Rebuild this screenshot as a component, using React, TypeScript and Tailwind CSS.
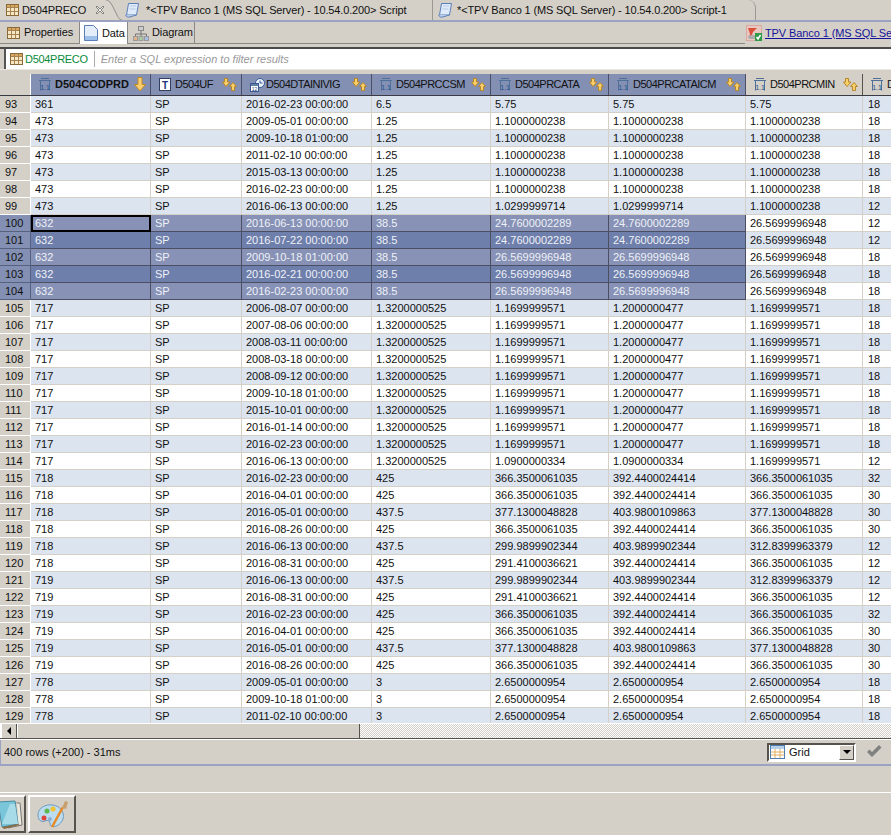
// @ts-nocheck
const FONT = "font-['Liberation_Sans',Arial,sans-serif]";

type Row = [number, string, string, string, string, string, string, string];

const P = "1.1000000238";
const A = "26.5699996948";
const K = "1.3200000525";
const L = "1.1699999571";
const M = "1.2000000477";
const S = "366.3500061035";
const T = "392.4400024414";
const U = "377.1300048828";
const V = "403.9800109863";
const W = "299.9899902344";
const X = "403.9899902344";
const Y = "312.8399963379";
const Z = "291.4100036621";
const G = "2.6500000954";

const rows: Row[] = [
  [93, "361", "2016-02-23 00:00:00", "6.5", "5.75", "5.75", "5.75", "18"],
  [94, "473", "2009-05-01 00:00:00", "1.25", P, P, P, "18"],
  [95, "473", "2009-10-18 01:00:00", "1.25", P, P, P, "18"],
  [96, "473", "2011-02-10 00:00:00", "1.25", P, P, P, "18"],
  [97, "473", "2015-03-13 00:00:00", "1.25", P, P, P, "18"],
  [98, "473", "2016-02-23 00:00:00", "1.25", P, P, P, "18"],
  [99, "473", "2016-06-13 00:00:00", "1.25", "1.0299999714", "1.0299999714", P, "12"],
  [100, "632", "2016-06-13 00:00:00", "38.5", "24.7600002289", "24.7600002289", A, "12"],
  [101, "632", "2016-07-22 00:00:00", "38.5", "24.7600002289", "24.7600002289", A, "12"],
  [102, "632", "2009-10-18 01:00:00", "38.5", A, A, A, "18"],
  [103, "632", "2016-02-21 00:00:00", "38.5", A, A, A, "18"],
  [104, "632", "2016-02-23 00:00:00", "38.5", A, A, A, "18"],
  [105, "717", "2006-08-07 00:00:00", K, L, M, L, "18"],
  [106, "717", "2007-08-06 00:00:00", K, L, M, L, "18"],
  [107, "717", "2008-03-11 00:00:00", K, L, M, L, "18"],
  [108, "717", "2008-03-18 00:00:00", K, L, M, L, "18"],
  [109, "717", "2008-09-12 00:00:00", K, L, M, L, "18"],
  [110, "717", "2009-10-18 01:00:00", K, L, M, L, "18"],
  [111, "717", "2015-10-01 00:00:00", K, L, M, L, "18"],
  [112, "717", "2016-01-14 00:00:00", K, L, M, L, "18"],
  [113, "717", "2016-02-23 00:00:00", K, L, M, L, "18"],
  [114, "717", "2016-06-13 00:00:00", K, "1.0900000334", "1.0900000334", L, "12"],
  [115, "718", "2016-02-23 00:00:00", "425", S, T, S, "32"],
  [116, "718", "2016-04-01 00:00:00", "425", S, T, S, "30"],
  [117, "718", "2016-05-01 00:00:00", "437.5", U, V, U, "30"],
  [118, "718", "2016-08-26 00:00:00", "425", S, T, S, "30"],
  [119, "718", "2016-06-13 00:00:00", "437.5", W, X, Y, "12"],
  [120, "718", "2016-08-31 00:00:00", "425", Z, T, S, "12"],
  [121, "719", "2016-06-13 00:00:00", "437.5", W, X, Y, "12"],
  [122, "719", "2016-08-31 00:00:00", "425", Z, T, S, "12"],
  [123, "719", "2016-02-23 00:00:00", "425", S, T, S, "32"],
  [124, "719", "2016-04-01 00:00:00", "425", S, T, S, "30"],
  [125, "719", "2016-05-01 00:00:00", "437.5", U, V, U, "30"],
  [126, "719", "2016-08-26 00:00:00", "425", S, T, S, "30"],
  [127, "778", "2009-05-01 00:00:00", "3", G, G, G, "18"],
  [128, "778", "2009-10-18 01:00:00", "3", G, G, G, "18"],
  [129, "778", "2011-02-10 00:00:00", "3", G, G, G, "18"],
];

function TableIcon() {
  return (
    <svg width="13" height="12" viewBox="0 0 13 12" className="shrink-0">
      <rect x="0.5" y="0.5" width="12" height="11" fill="#f6e8c4" stroke="#8a6a3a" />
      <rect x="1" y="1" width="11" height="2" fill="#d9a860" />
      <path d="M4.500 1v10M8.500 1v10M1 3.500h11M1 7.500h11" stroke="#a5824f" />
    </svg>
  );
}

function ScriptIcon() {
  return (
    <svg width="14" height="16" viewBox="0 0 14 16" className="shrink-0">
      <path d="M3.500 1.500h10l-2 11.500h-10z" fill="#dfeafa" stroke="#5b7fb5" />
      <path d="M0.500 13c1 2 2.500 2.500 4 2l7-2" fill="#b9d0ee" stroke="#5b7fb5" />
      <path d="M5 4h6M4.500 7h6" stroke="#b7cbe6" />
    </svg>
  );
}

function DataIcon() {
  return (
    <svg width="14" height="16" viewBox="0 0 14 16" className="shrink-0">
      <path d="M0.500 0.500h9l4 4v11h-13z" fill="#e4eefb" stroke="#5b7fb5" />
      <rect x="1" y="11" width="12" height="4" fill="#9cc0ea" />
    </svg>
  );
}

function DiagramIcon() {
  return (
    <svg width="16" height="16" viewBox="0 0 16 16" className="shrink-0">
      <path d="M8 5v4M2.500 11V9h11v2M8 9v2" fill="none" stroke="#777" />
      <rect x="5.500" y="1.500" width="5" height="4" fill="#ccc" stroke="#888" />
      <rect x="0.500" y="11.500" width="4" height="4" fill="#e7b48a" stroke="#999" />
      <rect x="6" y="11.500" width="4" height="4" fill="#a8d0a0" stroke="#999" />
      <rect x="11.500" y="11.500" width="4" height="4" fill="#a8c0e8" stroke="#999" />
    </svg>
  );
}

function NumIcon() {
  return (
    <svg width="12" height="13" viewBox="0 0 12 13" className="shrink-0">
      <path d="M0 2.500h12M2 0.500h8" stroke="#4f7098" />
      <path d="M1.500 3v9.500M10.500 3v9.500" stroke="#4f7098" />
      <text x="6" y="11.500" textAnchor="middle" fontSize="7" fill="#1f4f8a" fontFamily="Liberation Sans">1.1</text>
    </svg>
  );
}

function TextIcon() {
  return (
    <svg width="12" height="13" viewBox="0 0 12 13" className="shrink-0">
      <rect x="0.500" y="0.500" width="11" height="12" fill="#fff" stroke="#333e60" />
      <text x="6" y="10.500" textAnchor="middle" fontSize="10" fontWeight="700" fill="#1b3a78" fontFamily="Liberation Sans">T</text>
    </svg>
  );
}

function DateIcon() {
  return (
    <svg width="15" height="14" viewBox="0 0 15 14" className="shrink-0">
      <circle cx="10" cy="5" r="4.500" fill="#e8f0fa" stroke="#39598f" />
      <path d="M10 2.500V5h2.500" fill="none" stroke="#39598f" />
      <rect x="0.500" y="5.500" width="8" height="8" fill="#fff" stroke="#39598f" />
      <rect x="1" y="6" width="7" height="2" fill="#5f7ea8" />
      <text x="4.500" y="13" textAnchor="middle" fontSize="5" fill="#1b3a78" fontFamily="Liberation Sans">12</text>
    </svg>
  );
}

function SortIcon() {
  return (
    <svg width="15" height="13" viewBox="0 0 15 13" className="shrink-0">
      <path d="M2.500 0.500h3v3.500h2.500L4 8.500 0.500 4h2z" fill="#f8cf68" stroke="#b8862a" />
      <path d="M11 4.500l3.500 4H12.500v4h-3v-4H7.500z" fill="#f8cf68" stroke="#b8862a" />
    </svg>
  );
}

function SortDownIcon() {
  return (
    <svg width="12" height="15" viewBox="0 0 12 15" className="shrink-0">
      <path d="M4 0.500h4v7h3.500L6 14 0.500 7.500H4z" fill="#f7cf6e" stroke="#c08a24" />
    </svg>
  );
}

const headers = [
  { w: "w-[120px]", name: "D504CODPRD", Icon: NumIcon, sel: true, bold: true },
  { w: "w-[91px]", name: "D504UF", Icon: TextIcon, sel: true },
  { w: "w-[130px]", name: "D504DTAINIVIG", Icon: DateIcon, sel: true, tight: true },
  { w: "w-[119px]", name: "D504PRCCSM", Icon: NumIcon, sel: true },
  { w: "w-[118px]", name: "D504PRCATA", Icon: NumIcon, sel: true },
  { w: "w-[137px]", name: "D504PRCATAICM", Icon: NumIcon, sel: true },
  { w: "w-[117px]", name: "D504PRCMIN", Icon: NumIcon, sel: false },
];

const widths = ["w-[120px]", "w-[91px]", "w-[130px]", "w-[119px]", "w-[118px]", "w-[137px]", "w-[117px]"];

function GridRow({ row }: { row: Row }) {
  const [num, cod, dt, csm, ata, icm, min, last] = row;
  const selected = num >= 100 && num <= 104;
  const stripe = num % 2 === 1;
  const vals = [cod, "SP", dt, csm, ata, icm, min];
  return (
    <div className="flex h-[17px] shrink-0">
      <div
        className={`w-[31px] shrink-0 border-r border-b pl-[5px] leading-[17px] ${
          selected ? "bg-[#8390b4] border-[#56607f]" : "bg-[#d4d0c8] border-white"
        }`}
      >
        {num}
      </div>
      {vals.map((v, i) => {
        const inSel = selected && i < 6;
        const focus = num === 100 && i === 0;
        return (
          <div
            key={i}
            className={`${widths[i]} shrink-0 whitespace-nowrap ${
              focus
                ? "border-2 border-black leading-[13px] text-[#eef1f7] bg-[#8792b6] pl-[2px]"
                : "pl-[4px] border-r border-b leading-[16px] " +
                  (inSel
                    ? "text-[#eef1f7] border-[#4c4f62] " + (stripe ? "bg-[#6f7fab]" : "bg-[#8792b6]")
                    : "border-[#d4d0c8] " + (stripe ? "bg-[#dce4f0]" : "bg-white"))
            }`}
          >
            {v}
          </div>
        );
      })}
      <div
        className={`flex-1 border-b border-[#d4d0c8] pl-[5px] leading-[16px] ${stripe ? "bg-[#dce4f0]" : "bg-white"}`}
      >
        {last}
      </div>
    </div>
  );
}

function BottomButton({ children, w }: { children: any; w: string }) {
  return (
    <div className={`${w} h-[38px] flex items-center justify-center border-2 border-t-white border-l-white border-r-[#55534e] border-b-[#55534e] bg-[#d4d0c8] overflow-hidden`}>
      {children}
    </div>
  );
}

export default function App() {
  return (
    <div className={`${FONT} w-[891px] h-[835px] overflow-hidden bg-[#d4d0c8] text-[11px] text-[#111] flex flex-col`}>
      {/* Editor tabs */}
      <div className="h-[20px] shrink-0 flex items-stretch tracking-[-0.150px] whitespace-nowrap">
        <div className="w-[105px] flex items-center pl-[6px] bg-[#d8d4cc]">
          <TableIcon />
          <span className="ml-[3px]">D504PRECO</span>
          <svg width="10" height="10" viewBox="0 0 10 10" className="ml-[9px] shrink-0">
            <path d="M1 2l1-1 3 3 3-3 1 1-3 3 3 3-1 1-3-3-3 3-1-1 3-3z" fill="#f4f2ee" stroke="#6a6a66" strokeWidth="0.800" />
          </svg>
        </div>
        <svg width="17" height="20" viewBox="0 0 17 20" className="shrink-0">
          <path d="M0 0h1c4 0 6 5 9 11s4 9 7 9H0z" fill="#d8d4cc" />
          <path d="M1 0c4 0 6 5 9 11s4 9 7 9" fill="none" stroke="#8f8d87" />
        </svg>
        <div className="w-[311px] shrink-0 flex items-center gap-[7px] pl-[3px] border-r border-[#9a9892]">
          <ScriptIcon />
          <span>*&lt;TPV Banco 1 (MS SQL Server) - 10.54.0.200&gt; Script</span>
        </div>
        <div className="w-[323px] shrink-0 flex items-center gap-[5px] pl-[5px] border-r border-[#9a9892] rounded-tr-[8px]">
          <ScriptIcon />
          <span>*&lt;TPV Banco 1 (MS SQL Server) - 10.54.0.200&gt; Script-1</span>
        </div>
      </div>
      <div className="h-[2px] shrink-0 bg-[#9aa3c2]" />

      {/* View tabs */}
      <div className="h-[22px] shrink-0 flex items-stretch tracking-[-0.100px]">
        <div className="w-[79px] flex items-center gap-[4px] pl-[7px] border-b border-[#8a8a84]">
          <TableIcon />
          Properties
        </div>
        <div className="w-[49px] flex items-center gap-[4px] pl-[4px] bg-white border-r border-[#888] border-l border-l-[#888]">
          <DataIcon />
          Data
        </div>
        <div className="w-[67px] flex items-center gap-[3px] pl-[5px] border-r border-[#888] border-b border-b-[#8a8a84]">
          <DiagramIcon />
          Diagram
        </div>
        <div className="w-[550px] border-b border-[#8a8a84]" />
        <div className="flex-1 flex items-center gap-[3px] pl-[1px] whitespace-nowrap overflow-hidden">
          <svg width="16" height="16" viewBox="0 0 16 16" className="shrink-0">
            <rect x="0.500" y="0.500" width="15" height="15" fill="#e8c8c0" stroke="#d9a8a0" />
            <path d="M2 3h9L7 7l-2 5-2 1 1-4z" fill="#d9503c" />
            <ellipse cx="6" cy="12" rx="4" ry="2" fill="#aaa" />
            <rect x="9" y="8" width="7" height="8" fill="#2f9a4a" />
            <path d="M10.500 12l1.500 2 2.500-4" fill="none" stroke="#fff" strokeWidth="1.500" />
          </svg>
          <span className="text-[#14149a] underline">TPV Banco 1 (MS SQL Server)</span>
        </div>
      </div>

      {/* Filter bar */}
      <div className="h-[2px] shrink-0 bg-[#4a4a4a] mt-[3px]" />
      <div className="h-[20px] shrink-0 bg-white flex items-center pl-[4px] border-l-2 border-[#555] ml-[4px]">
        <TableIcon />
        <span className="text-[#0a8a3a] ml-[2px] tracking-[-0.300px]">D504PRECO</span>
        <span className="w-[1px] h-[16px] bg-[#aaa] mx-[6px]" />
        <span className="italic text-[#999]">Enter a SQL expression to filter results</span>
      </div>
      <div className="h-[5px] shrink-0 border-t border-[#e9e6df]" />

      {/* Header */}
      <div className="h-[22px] shrink-0 flex border-b border-[#3a3a44]">
        <div className="w-[31px] shrink-0 bg-[#d4d0c8] border-r border-white" />
        {headers.map((h) => (
          <div
            key={h.name}
            className={`${h.w} shrink-0 flex items-center border-r pl-[8px] pr-[4px] whitespace-nowrap ${
              h.sel ? "bg-[#8390b4] border-[#4a4f66]" : "bg-[#d4d0c8] border-[#55534e]"
            }`}
          >
            <h.Icon />
            <span className={`${h.tight ? "ml-[1px]" : "ml-[4px]"} ${h.bold ? "font-bold" : "tracking-[-0.500px]"}`}>{h.name}</span>
            <span className="ml-auto flex">{h.bold ? <SortDownIcon /> : <SortIcon />}</span>
          </div>
        ))}
        <div className="flex-1 flex items-center pl-[8px] overflow-hidden bg-[#d4d0c8]">
          <NumIcon />
          <span className="ml-[4px]">D</span>
        </div>
      </div>

      {/* Rows */}
      <div className="h-[627px] shrink-0 overflow-hidden flex flex-col">
        {rows.map((r) => (
          <GridRow key={r[0]} row={r} />
        ))}
      </div>

      {/* Horizontal scrollbar */}
      <div className="h-[15px] shrink-0 flex border-t border-white">
        <div className="w-[360px] flex bg-[#d4d0c8]">
          <div className="w-[17px] h-[14px] flex items-center justify-center border-r border-[#55534e] border-l-2 border-l-white bg-[#d4d0c8]">
            <div className="w-0 h-0 border-y-[4px] border-y-transparent border-r-[4px] border-r-black" />
          </div>
          <div className="flex-1 border-l border-white border-r border-r-[#55534e]" />
        </div>
        <div className="flex-1 bg-[repeating-conic-gradient(#d4d0c8_0_25%,#ffffff_0_50%)] bg-[length:2px_2px]" />
      </div>
      <div className="h-[2px] shrink-0 bg-[#55534e] border-b border-white" />

      {/* Status bar */}
      <div className="h-[24px] shrink-0 flex items-center pl-[3px] pr-[9px] border-l border-[#9aa3c2]">
        <span>400 rows (+200) - 31ms</span>
        <div className="ml-auto flex items-center w-[89px] h-[19px] border-2 border-t-[#55534e] border-l-[#55534e] border-r-white border-b-white bg-white pl-[1px]">
          <svg width="15" height="14" viewBox="0 0 15 14" className="shrink-0">
            <rect x="0.500" y="0.500" width="14" height="13" fill="#fff" stroke="#4f7fb0" />
            <rect x="1" y="1" width="13" height="3" fill="#b7d0ea" />
            <path d="M5 4v9M10 4v9M1 7h13M1 10h13" stroke="#e0b060" />
          </svg>
          <span className="ml-[4px]">Grid</span>
          <div className="ml-auto w-[15px] h-full flex items-center justify-center bg-[#d4d0c8] border border-t-white border-l-white border-r-[#55534e] border-b-[#55534e]">
            <div className="w-0 h-0 border-x-[4px] border-x-transparent border-t-[4px] border-t-black" />
          </div>
        </div>
        <svg width="16" height="14" viewBox="0 0 16 14" className="ml-[10px] shrink-0">
          <path d="M1 7l2.500-2.500L6 7l7-7 2.500 2.500L6 12z" fill="#808080" />
        </svg>
      </div>
      <div className="h-[2px] shrink-0 bg-[#9aa3c2]" />

      {/* Bottom strip */}
      <div className="h-[26px] shrink-0" />
      <div className="h-[1px] shrink-0 bg-white" />
      <div className="h-[2px] shrink-0" />
      <div className="flex gap-[2px] -ml-[24px] shrink-0">
        <BottomButton w="w-[50px]">
          <svg width="46" height="32" viewBox="0 0 46 32">
            <path d="M28 5l14 0 2 22-14 3z" fill="#ece9e0" stroke="#777" />
            <path d="M39 4l1.500 23-12 2.500-4 0 0-3z" fill="#cfcbc0" />
            <path d="M20 4l17-1 3 23-16 3z" fill="#79c6da" stroke="#4a8aa0" />
            <path d="M24 26l8-20 5 0 3 20z" fill="#a8dbe8" />
            <path d="M24 29l16-3 2 1-16 4z" fill="#8a6a44" />
          </svg>
        </BottomButton>
        <BottomButton w="w-[48px]">
          <svg width="34" height="32" viewBox="0 0 34 32">
            <path d="M3 17C3 10 10 6 18 7c7 1 12 7 10 14-2 6-9 9-12 7-2-2 0-4-2-5-3-2-5 2-8 0-2-1-3-3-3-6z" fill="#bcdcf0" stroke="#6f9cc0" />
            <circle cx="9" cy="20" r="2.500" fill="#e0443c" />
            <circle cx="12" cy="13" r="2.500" fill="#5cb84c" />
            <circle cx="18" cy="11" r="2.500" fill="#f2c230" />
            <circle cx="15" cy="21" r="2" fill="#8fb0cc" />
            <path d="M17 29L28 9" stroke="#e88a24" strokeWidth="2.500" />
            <path d="M27 10l3-7 3 1-2 7z" fill="#c8a070" />
          </svg>
        </BottomButton>
      </div>
    </div>
  );
}
